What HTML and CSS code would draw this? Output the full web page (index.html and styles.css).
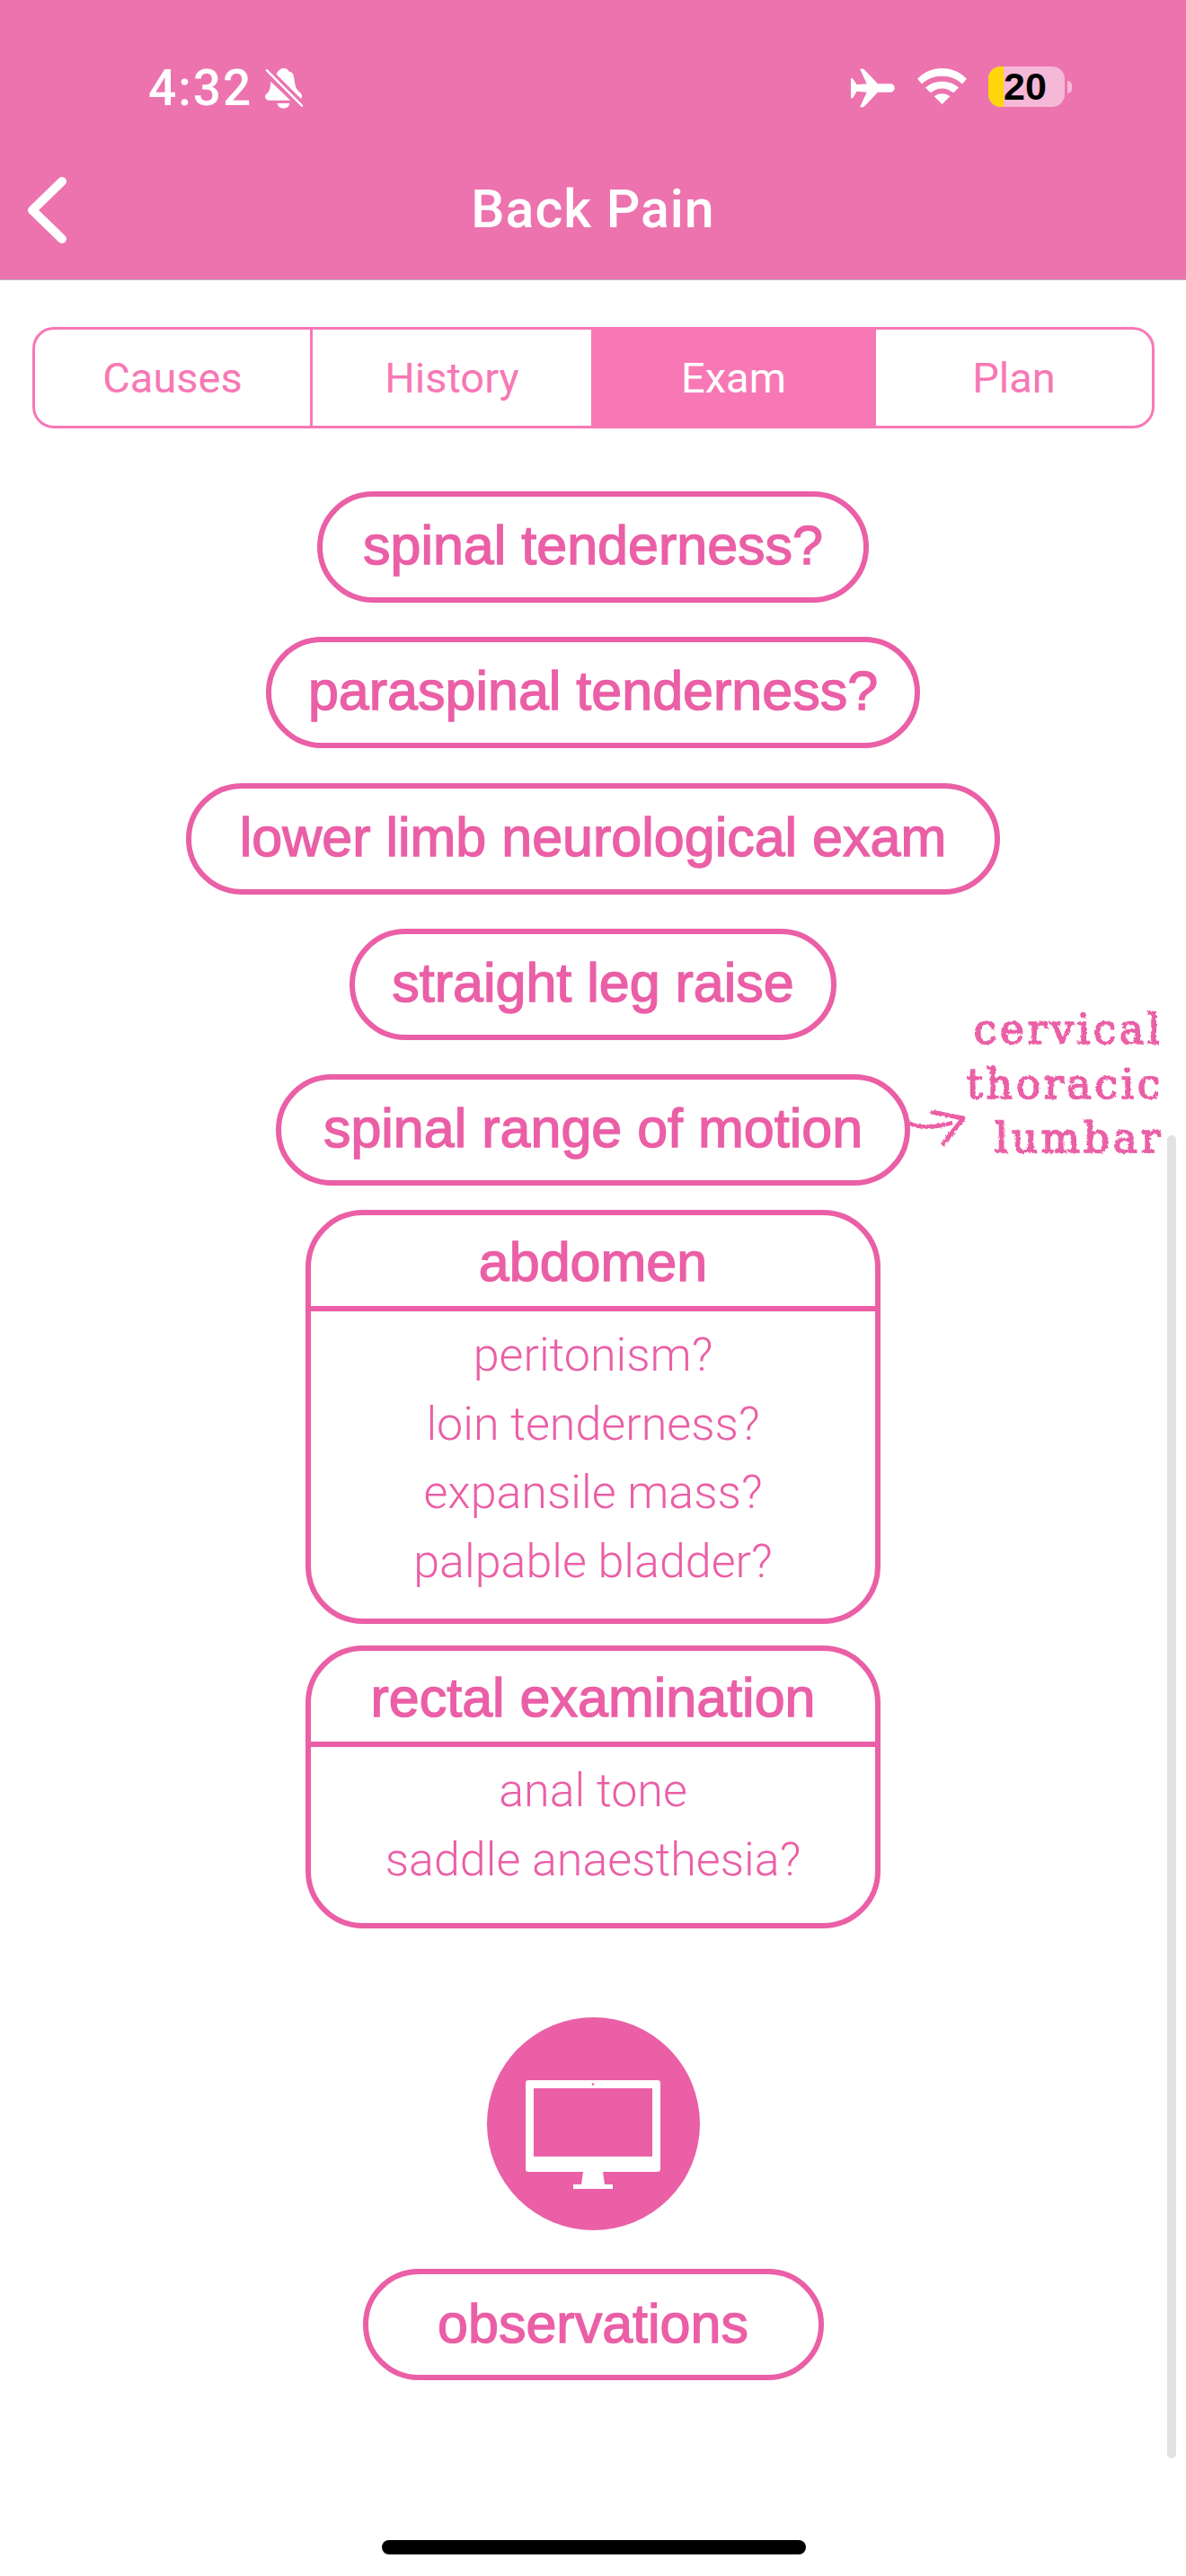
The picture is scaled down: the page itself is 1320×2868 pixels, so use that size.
FILE: index.html
```html
<!DOCTYPE html>
<html lang="en">
<head>
<meta charset="utf-8">
<title>Back Pain</title>
<link rel="stylesheet" href="styles.css">
</head>
<body>
<svg class="defs" width="0" height="0"><filter id="chalk" x="-5%" y="-5%" width="110%" height="110%"><feTurbulence type="fractalNoise" baseFrequency="0.35" numOctaves="2" seed="4" result="n"/><feDisplacementMap in="SourceGraphic" in2="n" scale="3.5"/></filter></svg>
<div class="screen">
  <header class="top">
    <div class="status">
      <div class="status-left">
        <span class="time">4:32</span>
        <svg class="bell" viewBox="0 0 42 45" width="42" height="45"><path d="M12.6 6.7C14 3 17 0 21 0c3 0 5 2 6 4 3 0 4.500 2 5 5 1 5 1 11 4 15 2 2.500 5 4 5 7 0 1-.3 2-1 3z" fill="#fff"/><path d="M6.300 14.700 28.200 35.700H4C1.500 35.700 0 33.500 0 31.500 0 29 3.500 28 5 24c1-3 1-6 1.300-9.300z" fill="#fff"/><path d="M13.500 39H27.400C27 42.500 24 44.700 20.500 44.700S14 42.500 13.500 39z" fill="#fff"/><path d="M2 2.300 41 41.700" stroke="#fff" stroke-width="2.400" stroke-linecap="round" fill="none"/></svg>
      </div>
      <div class="status-right">
        <svg class="plane" viewBox="0 0 49 44" width="49" height="44"><path d="M10 .7H14.300L30 17.300H44.300C47 17.300 48.700 20 48.700 22S47 26.700 44.300 26.700H30L14.300 43.300H10L17.700 26.700 6.700 25.700 2 33.300H0V11.300H2L6.700 18.300 17.700 17.300z" fill="#fff"/></svg>
        <svg class="wifi" viewBox="0 0 58 44" width="57" height="43"><path d="M29 1C18 1 9 5 1 13l5 6c6-6 14-9 23-9s17 3 23 9l5-6C49 5 40 1 29 1z" fill="#fff"/><path d="M29 16c-7 0-13 2-19 7l6 6c4-3 8-5 13-5s9 2 13 5l6-6c-6-5-12-7-19-7z" fill="#fff"/><path d="M29 30c-4 0-6 1-9 3l9 9 9-9c-3-2-5-3-9-3z" fill="#fff"/></svg>
        <div class="battery">
          <div class="batt-body"><div class="batt-fill"></div><span class="batt-num">20</span></div>
          <div class="batt-cap"></div>
        </div>
      </div>
    </div>
    <div class="nav">
      <svg class="back" viewBox="0 0 44 74" width="44" height="74"><path d="M38 5 5 37 38 69" fill="none" stroke="#fff" stroke-width="10" stroke-linecap="round" stroke-linejoin="round"/></svg>
      <h1 class="title">Back Pain</h1>
    </div>
  </header>

  <main class="content">
    <div class="tabs">
      <div class="tab tab-causes">Causes</div>
      <div class="tab tab-history">History</div>
      <div class="tab tab-exam">Exam</div>
      <div class="tab tab-plan">Plan</div>
    </div>

    <div class="stack">
      <div class="pill p-spinal">spinal tenderness?</div>
      <div class="pill p-para">paraspinal tenderness?</div>
      <div class="pill p-lower">lower limb neurological exam</div>
      <div class="pill p-slr">straight leg raise</div>
      <div class="pill p-rom">spinal range of motion
        <div class="note">
          <svg class="arrow" viewBox="0 0 64 40" width="64" height="40"><path d="M0 14C8 20 28 20 48 14" fill="none" stroke="#ea5fa6" stroke-width="4.500"/><path d="M25 2 60 9 38 37" fill="none" stroke="#ea5fa6" stroke-width="5" stroke-linecap="round" stroke-linejoin="round"/></svg>
          <div class="note-text">cervical<br>thoracic<br>lumbar</div>
        </div>
      </div>

      <section class="card card-abdomen">
        <h2 class="card-head">abdomen</h2>
        <div class="card-body">
          <div>peritonism?</div>
          <div>loin tenderness?</div>
          <div>expansile mass?</div>
          <div>palpable bladder?</div>
        </div>
      </section>

      <section class="card card-rectal">
        <h2 class="card-head">rectal examination</h2>
        <div class="card-body">
          <div>anal tone</div>
          <div>saddle anaesthesia?</div>
        </div>
      </section>

      <div class="circle">
        <svg viewBox="0 0 150 121" width="150" height="121"><path fill-rule="evenodd" d="M3 0H147a3 3 0 0 1 3 3V99a3 3 0 0 1-3 3H86L88 116H97V121H53V116H62L64 102H3a3 3 0 0 1-3-3V3a3 3 0 0 1 3-3ZM9 9V85H141V9Z" fill="#fff"/><circle cx="75" cy="4.500" r="1.300" fill="#ea5fa6"/></svg>
      </div>
      <div class="pill p-obs">observations</div>
    </div>
  </main>

  <div class="scrollbar"></div>
  <div class="home"></div>
</div>
</body>
</html>
```
FILE: styles.css
```css
* { box-sizing: border-box; }
html, body { margin: 0; padding: 0; }
body { background: #fff; font-family: "Liberation Sans", Arial, sans-serif; }
.defs { position: absolute; }
.screen { position: relative; width: 1320px; height: 2868px; overflow: hidden; background: #fff; }

.top { height: 312px; background: #ec73ae; border-bottom: 1px solid #b5b5b5; color: #fff; }
.status { height: 156px; padding: 74px 127px 0 165px; display: flex; justify-content: space-between; align-items: flex-start; }
.status-left { display: flex; align-items: flex-start; gap: 14px; }
.time { margin-top: 1px; font-family: Roboto, sans-serif; font-size: 55px; line-height: 46px; height: 46px; font-weight: 500; letter-spacing: 2px; }
.bell { margin-top: 2px; }
.status-right { display: flex; align-items: flex-start; }
.plane { margin-top: 2px; }
.wifi { margin-top: 1px; margin-left: 24px; }
.battery { display: flex; align-items: center; margin-left: 23px; }
.batt-body { position: relative; width: 85px; height: 45px; background: #f5b8d7; border-radius: 14px; }
.batt-fill { width: 17px; height: 100%; background: #ffd60a; border-radius: 14px 0 0 14px; }
.batt-num { position: absolute; left: 17px; top: 0; font-size: 43px; line-height: 45px; font-weight: 700; color: #000; }
.batt-cap { width: 5px; height: 14px; margin-left: 3px; background: #f5b8d7; border-radius: 0 6px 6px 0; }

.nav { position: relative; height: 155px; display: flex; align-items: flex-start; justify-content: center; }
.back { position: absolute; left: 31px; top: 41px; }
.title { margin: 0; padding-top: 44px; font-family: Roboto, sans-serif; font-size: 59px; line-height: 66px; font-weight: 500; letter-spacing: 1px; }

.content { padding: 52px 35px 0 36px; }
.tabs { display: flex; height: 113px; border: 3px solid #f778b4; border-radius: 24px; overflow: hidden; color: #f778b4; font-family: Roboto, sans-serif; font-size: 47px; }
.tab { display: flex; align-items: center; justify-content: center; }
.tab-causes { width: 309px; border-right: 3px solid #f778b4; }
.tab-history { width: 310px; }
.tab-exam { width: 317px; background: #f778b4; color: #fff; }
.tab-plan { flex: 1; }

.stack { display: flex; flex-direction: column; align-items: center; padding: 70px 1px 0 0; color: #ea5fa6; }
.pill { position: relative; flex: none; height: 124px; margin-bottom: 38.250px; padding: 0 0 4px; display: flex; align-items: center; justify-content: center; border: 6px solid #ea5fa6; border-radius: 62px; font-size: 61px; font-weight: 400; -webkit-text-stroke: 1.400px #ea5fa6; white-space: nowrap; background: #fff; }
.p-spinal { width: 614px; }
.p-para { width: 728px; }
.p-lower { width: 906px; }
.p-slr { width: 542px; }
.p-rom { width: 706px; margin-bottom: 27px; }
.p-obs { width: 513px; margin-bottom: 0; padding-bottom: 3px; }

.note { position: absolute; left: 699px; top: 0; -webkit-text-stroke: 0; }
.arrow { position: absolute; left: 0; top: 34px; filter: url(#chalk); }
.note-text { position: absolute; left: 43px; top: -86px; width: 240px; text-align: right; font-family: "DejaVu Serif", serif; font-size: 46px; line-height: 60.500px; letter-spacing: 3.500px; -webkit-text-stroke: 1.600px #ea5fa6; filter: url(#chalk); }

.card { flex: none; width: 640px; border: 6px solid #ea5fa6; border-radius: 64px; margin-bottom: 24px; text-align: center; }
.card-head { margin: 0; height: 107px; border-bottom: 6px solid #ea5fa6; font-size: 61px; line-height: 104px; font-weight: 400; -webkit-text-stroke: 1.400px #ea5fa6; }
.card-body { padding-top: 11px; font-family: Roboto, sans-serif; font-weight: 300; font-size: 52px; line-height: 76.500px; }
.card-abdomen .card-body { padding-bottom: 25px; }
.card-rectal { margin-bottom: 99px; }
.card-rectal .card-body { padding-bottom: 32px; }

.circle { flex: none; width: 237px; height: 237px; margin-bottom: 43px; border-radius: 50%; background: #ea5fa6; display: flex; align-items: center; justify-content: center; }
.circle svg { margin-top: 24px; }

.scrollbar { position: absolute; left: 1299px; top: 1264px; width: 10px; height: 1473px; background: #e2e2e2; border-radius: 5px; }
.home { position: absolute; left: 425px; top: 2828px; width: 472px; height: 16px; background: #000; border-radius: 8px; }
```
